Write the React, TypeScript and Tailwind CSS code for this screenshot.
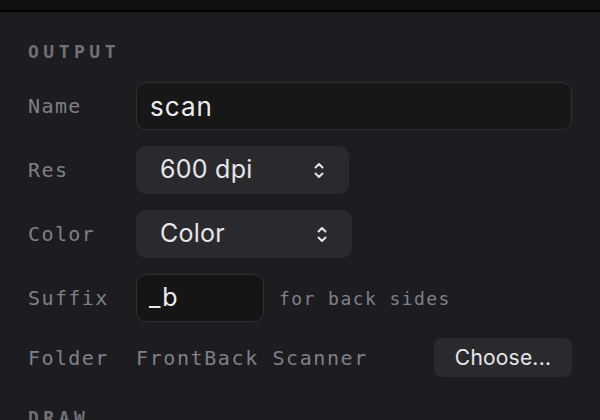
import React from "react";

const mono = { fontFamily: '"DejaVu Sans Mono", "Liberation Mono", monospace' };
const sans = { fontFamily: 'Inter, "Noto Sans", sans-serif' };

function Chevrons() {
  return (
    <svg width="10" height="19" viewBox="0 0 10 19" fill="none" stroke="#e4e4e7" strokeWidth="2" strokeLinecap="round" strokeLinejoin="round">
      <path d="M1.5 6.5L5 3L8.5 6.5" />
      <path d="M1.5 12.5L5 16L8.5 12.5" />
    </svg>
  );
}

function Label({ children }: { children: React.ReactNode }) {
  return (
    <div className="text-[20px] leading-none tracking-[0.07em] text-[#808085]" style={mono}>
      {children}
    </div>
  );
}

function SectionTitle({ children }: { children: React.ReactNode }) {
  return (
    <div className="text-[18px] font-bold leading-5 tracking-[0.25em] text-[#707075]" style={mono}>
      {children}
    </div>
  );
}

function Select({ value, width }: { value: string; width: string }) {
  return (
    <div className={`flex h-12 items-center justify-between rounded-[10px] bg-[#2a2a2e] pl-6 pr-[25px] ${width}`}>
      <span className="text-[25px] tracking-[0.01em] text-[#e6e6e8]" style={sans}>
        {value}
      </span>
      <Chevrons />
    </div>
  );
}

export default function App() {
  return (
    <div className="flex h-[420px] w-[600px] flex-col overflow-hidden bg-[#1c1c21]">
      <div className="h-[10px] shrink-0 border-b-2 border-black bg-[#111113] box-content" />
      <div className="flex flex-col px-7 pt-[30px]">
        <SectionTitle>OUTPUT</SectionTitle>
        <div className="mt-5 grid grid-cols-[108px_1fr] items-center gap-y-4">
          <Label>Name</Label>
          <div className="flex h-12 items-center rounded-[10px] border border-[#303035] bg-[#171717] px-[13px]">
            <span className="text-[26px] tracking-[0.04em] text-[#ececee]" style={sans}>
              scan
            </span>
          </div>

          <Label>Res</Label>
          <Select value="600 dpi" width="w-[213px]" />

          <Label>Color</Label>
          <Select value="Color" width="w-[216px]" />

          <Label>Suffix</Label>
          <div className="flex items-center gap-[15px]">
            <div className="flex h-12 w-32 items-center rounded-[10px] border border-[#303035] bg-[#151515] px-[12px]">
              <span className="text-[25px] tracking-[0.04em] text-[#ececee]" style={sans}>
                _b
              </span>
            </div>
            <span className="text-[18px] tracking-[0.08em] text-[#808085]" style={mono}>
              for back sides
            </span>
          </div>

          <Label>Folder</Label>
          <div className="flex h-[39px] items-center justify-between">
            <span className="text-[20px] tracking-[0.08em] text-[#808085]" style={mono}>
              FrontBack Scanner
            </span>
            <button className="flex h-[39px] w-[138px] items-center justify-center rounded-lg bg-[#2a2a2e] text-[21px] tracking-[0.01em] text-[#e6e6e8]" style={sans}>
              Choose...
            </button>
          </div>
        </div>
        <div className="mt-[31px]">
          <SectionTitle>DRAW</SectionTitle>
        </div>
      </div>
    </div>
  );
}
